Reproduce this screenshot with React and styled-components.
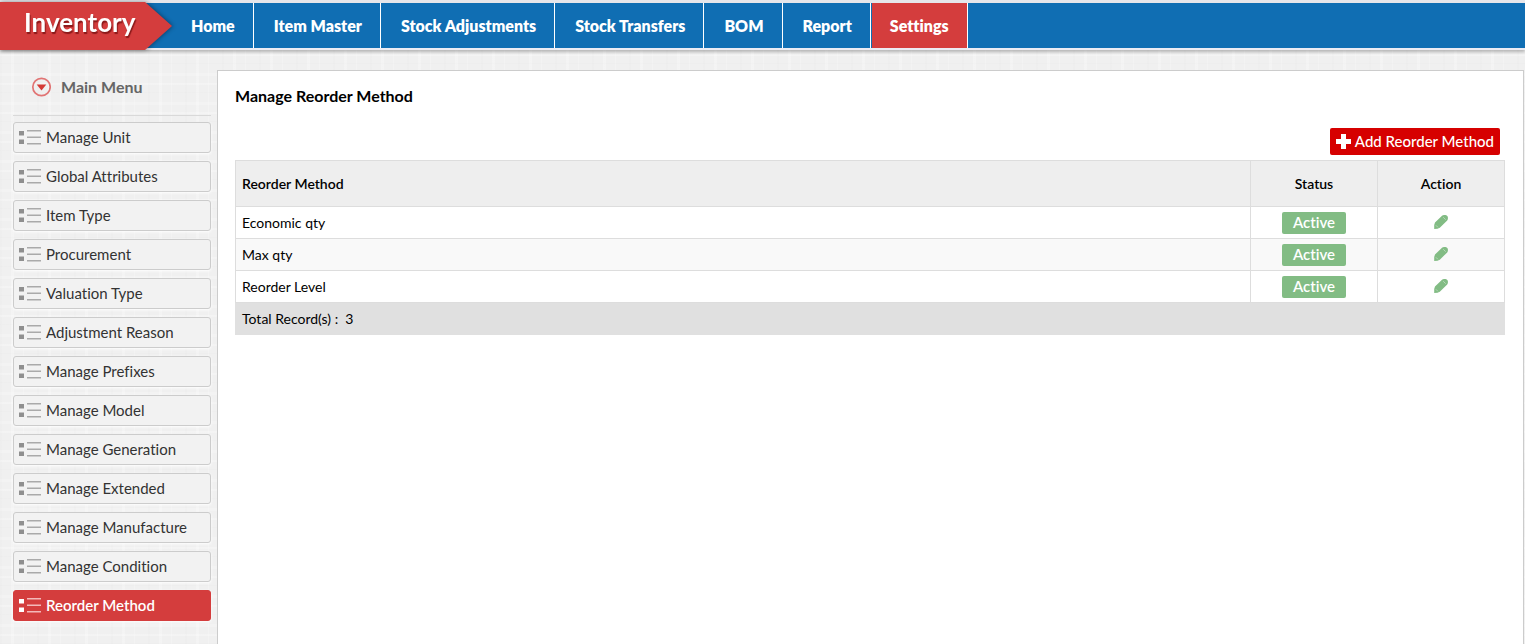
import React from "react";
import styled, { createGlobalStyle } from "styled-components";

const RED = "#d43d3d";
const BLUE = "#106eb3";

const Global = createGlobalStyle`
  *, *::before, *::after { box-sizing: border-box; }
  body {
    margin: 0;
    font-family: Lato, "Liberation Sans", sans-serif;
    font-size: 14px;
    font-variant-ligatures: none;
    line-height: 20px;
    color: #000;
    background-color: #f0f0f0;
    background-image:
      repeating-linear-gradient(90deg, rgba(0,0,0,0.008) 0 2px, transparent 2px 11px, rgba(255,255,255,0.25) 11px 14px, transparent 14px 23px, rgba(255,255,255,0.2) 23px 24px, transparent 24px 37px),
      repeating-linear-gradient(0deg, rgba(0,0,0,0.008) 0 1px, transparent 1px 8px, rgba(255,255,255,0.25) 8px 10px, transparent 10px 17px, rgba(255,255,255,0.2) 17px 20px, transparent 20px 29px);
  }
`;

const Page = styled.div`
  display: flex;
  flex-direction: column;
  min-height: 100vh;
`;

const Header = styled.header`
  display: flex;
  height: 50px;
  padding-top: 2px;
  background: linear-gradient(#e6e6ea 3px, ${BLUE} 3px, ${BLUE} 48px, #ececf4 48px);
  box-shadow: 0 2px 3px rgba(0, 0, 0, 0.25);
`;

const Brand = styled.a`
  display: block;
  flex: none;
  width: 172px;
  padding-left: 24px;
  color: #fff;
  font-size: 26px;
  font-weight: 700;
  line-height: 40px;
  text-decoration: none;
  text-shadow: 1px 2px 1px rgba(90, 0, 0, 0.6);
  position: relative;
  z-index: 0;
  filter: drop-shadow(1px 0 2px rgba(0, 0, 0, 0.4));

  &::before {
    content: "";
    position: absolute;
    inset: 0;
    z-index: -1;
    background: ${RED};
    clip-path: polygon(0 0, 145px 0, 172px 24px, 145px 100%, 0 100%);
  }
`;

const Nav = styled.nav`
  display: flex;
  padding: 1px 0 2px;
`;

const NavLink = styled.a`
  padding: 0 18px 0 20px;
  border-right: 1px solid #fff;
  color: #fff;
  font-size: 16px;
  font-weight: 800;
  line-height: 46px;
  text-decoration: none;
  white-space: nowrap;

  &:first-child {
    padding-left: 19px;
  }

  &[aria-current] {
    margin-left: 1px;
    padding: 0 18px;
    background: ${RED};
  }
`;

const Body = styled.div`
  display: flex;
  flex: 1;
  padding: 20px 1px 0 13px;
`;

const Sidebar = styled.aside`
  flex: none;
  width: 198px;
  margin-right: 6px;
`;

const MenuTitle = styled.h2`
  display: flex;
  align-items: center;
  gap: 10px;
  height: 46px;
  margin: 0 0 6px;
  padding: 0 0 12px 18px;
  border-bottom: 1px solid #d9d9d9;
  color: #666;
  font-size: 16px;
  font-weight: 700;
`;

const MenuList = styled.ul`
  display: flex;
  flex-direction: column;
  gap: 8px;
  margin: 0;
  padding: 0 0 8px;
  list-style: none;
`;

const MenuLink = styled.a`
  display: flex;
  align-items: center;
  gap: 5px;
  height: 31px;
  padding: 0 0 2px 5px;
  border: 1px solid ${(p) => (p.$active ? RED : "#ccc")};
  border-radius: 3px;
  background: ${(p) => (p.$active ? RED : "#f2f2f2")};
  box-shadow: 0 1px 3px #fff;
  color: ${(p) => (p.$active ? "#fff" : "#333")};
  font-size: 15px;
  font-weight: ${(p) => (p.$active ? 600 : 400)};
  text-decoration: none;
`;

const Panel = styled.main`
  flex: 1;
  min-width: 0;
  padding: 15px 18px 20px 17px;
  border: 1px solid #ccc;
  border-bottom: 0;
  background: #fff;
`;

const Title = styled.h1`
  margin: 0;
  font-size: 16px;
  font-weight: 700;
  line-height: 20px;
`;

const Toolbar = styled.div`
  display: flex;
  justify-content: flex-end;
  padding: 22px 5px 5px 0;
`;

const AddButton = styled.button`
  display: flex;
  align-items: center;
  gap: 4px;
  height: 27px;
  padding: 0 6px 1px;
  border: 0;
  border-radius: 2px;
  background: #d60000;
  color: #fff;
  font: 500 15px/20px Lato, "Liberation Sans", sans-serif;
`;

const Table = styled.table`
  width: 100%;
  border-collapse: collapse;
  table-layout: fixed;
  font-size: 14px;
`;

const HeadCell = styled.th`
  width: ${(p) => (p.$narrow ? "127px" : "auto")};
  height: 46px;
  padding: 0 6px;
  border: 1px solid #ddd;
  background: #eee;
  font-size: 14px;
  font-weight: 600;
  text-align: ${(p) => (p.$narrow ? "center" : "left")};
`;

const Row = styled.tr`
  background: #fff;

  &:nth-child(even) {
    background: #f9f9f9;
  }
`;

const Cell = styled.td`
  height: 32px;
  padding: 0 6px;
  border: 1px solid #ddd;
  text-align: ${(p) => (p.$center ? "center" : "left")};
`;

const TotalCell = styled.td`
  height: 32px;
  padding: 0 6px;
  border: 1px solid #e0e0e0;
  background: #e0e0e0;
  white-space: pre;
`;

const Badge = styled.span`
  display: block;
  width: 64px;
  margin: 0 auto;
  padding-bottom: 2px;
  border-radius: 2px;
  background: #82bc84;
  color: #fff;
  font-size: 15px;
  font-weight: 600;
  line-height: 20px;
`;

const EditButton = styled.button`
  display: block;
  margin: 0 auto;
  padding: 0 0 2px;
  border: 0;
  background: none;
  color: #82bc84;

  svg {
    display: block;
  }
`;

function DownIcon() {
  return (
    <svg width="20" height="20" viewBox="0 0 20 20" aria-hidden="true">
      <circle cx="10.500" cy="10" r="8.700" fill="none" stroke="#e17474" strokeWidth="1.700" />
      <path d="M5.700 7.600h9.600L10.500 13.400z" fill="#d43a36" />
    </svg>
  );
}

function ListIcon({ active }) {
  const square = active ? "#fff" : "#8f8f8f";
  const line = active ? "#f3b9b9" : "#aaa";
  return (
    <svg width="22" height="17" viewBox="0 -2 22 17" aria-hidden="true">
      <path d="M0 1h5v4.500H0zM0 9.500h5v4.500H0z" fill={square} />
      <path d="M8 0h14v1.500H8zM8 6.500h14V8H8zM8 13h14v1.500H8z" fill={line} />
    </svg>
  );
}

function PlusIcon() {
  return (
    <svg width="15" height="15" viewBox="0 0 15 15" aria-hidden="true">
      <path d="M5 0h5v5h5v5h-5v5H5v-5H0V5h5z" fill="#fff" />
    </svg>
  );
}

function PencilIcon() {
  return (
    <svg width="14" height="14" viewBox="0 0 14 14" aria-hidden="true">
      <path d="M8 .700Q8.800 0 10 0h1.500Q12.300 0 13 .700q.900.700.900 1.600v1.500q0 .900-.700 1.600L5.800 12.800 3.500 13.800.2 14 .2 10 1 7.500Z" fill="currentColor" />
      <path d="M9.200 2.200 11.700 4.700M1.900 10.300l2 2" stroke="#fff" strokeOpacity=".45" strokeWidth=".9" fill="none" />
    </svg>
  );
}

const nav = ["Home", "Item Master", "Stock Adjustments", "Stock Transfers", "BOM", "Report", "Settings"];
const menu = [
  "Manage Unit", "Global Attributes", "Item Type", "Procurement", "Valuation Type",
  "Adjustment Reason", "Manage Prefixes", "Manage Model", "Manage Generation",
  "Manage Extended", "Manage Manufacture", "Manage Condition", "Reorder Method",
];
const methods = ["Economic qty", "Max qty", "Reorder Level"];

export default function App() {
  return (
    <Page>
      <Global />
      <Header>
        <Brand href="#">Inventory</Brand>
        <Nav>
          {nav.map((name) => (
            <NavLink key={name} href="#" aria-current={name === "Settings" ? "page" : undefined}>
              {name}
            </NavLink>
          ))}
        </Nav>
      </Header>
      <Body>
        <Sidebar>
          <MenuTitle><DownIcon />Main Menu</MenuTitle>
          <MenuList>
            {menu.map((name) => (
              <li key={name}>
                <MenuLink href="#" $active={name === "Reorder Method"}>
                  <ListIcon active={name === "Reorder Method"} />
                  {name}
                </MenuLink>
              </li>
            ))}
          </MenuList>
        </Sidebar>
        <Panel>
          <Title>Manage Reorder Method</Title>
          <Toolbar>
            <AddButton type="button"><PlusIcon />Add Reorder Method</AddButton>
          </Toolbar>
          <Table>
            <thead>
              <tr>
                <HeadCell scope="col">Reorder Method</HeadCell>
                <HeadCell scope="col" $narrow>Status</HeadCell>
                <HeadCell scope="col" $narrow>Action</HeadCell>
              </tr>
            </thead>
            <tbody>
              {methods.map((name) => (
                <Row key={name}>
                  <Cell>{name}</Cell>
                  <Cell $center><Badge>Active</Badge></Cell>
                  <Cell $center>
                    <EditButton type="button" aria-label={`Edit ${name}`}><PencilIcon /></EditButton>
                  </Cell>
                </Row>
              ))}
            </tbody>
            <tfoot>
              <tr>
                <TotalCell colSpan={3}>{"Total Record(s) :  3"}</TotalCell>
              </tr>
            </tfoot>
          </Table>
        </Panel>
      </Body>
    </Page>
  );
}
